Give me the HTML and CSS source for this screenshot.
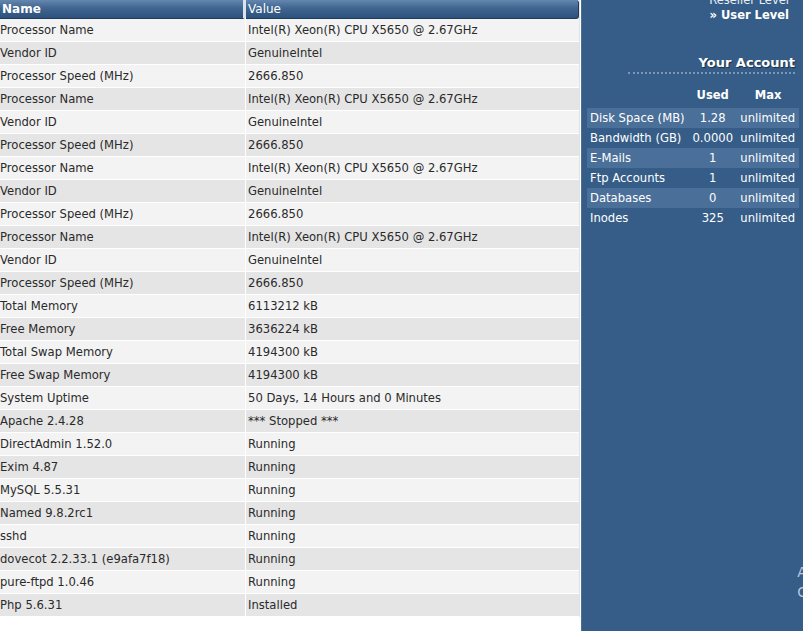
FILE: index.html
```html
<!DOCTYPE html>
<html lang="en">
<head>
  <meta charset="UTF-8">
  <title>System Information</title>
  <link rel="stylesheet" href="styles.css">
</head>
<body>
  <div class="page">
    <!-- System info table -->
    <div class="main">
      <table class="info">
        <thead>
          <tr><th class="name-head">Name</th><th class="value-head">Value</th></tr>
        </thead>
        <tbody>
          <tr><td>Processor Name</td><td>Intel(R) Xeon(R) CPU X5650 @ 2.67GHz</td></tr>
          <tr><td>Vendor ID</td><td>GenuineIntel</td></tr>
          <tr><td>Processor Speed (MHz)</td><td>2666.850</td></tr>
          <tr><td>Processor Name</td><td>Intel(R) Xeon(R) CPU X5650 @ 2.67GHz</td></tr>
          <tr><td>Vendor ID</td><td>GenuineIntel</td></tr>
          <tr><td>Processor Speed (MHz)</td><td>2666.850</td></tr>
          <tr><td>Processor Name</td><td>Intel(R) Xeon(R) CPU X5650 @ 2.67GHz</td></tr>
          <tr><td>Vendor ID</td><td>GenuineIntel</td></tr>
          <tr><td>Processor Speed (MHz)</td><td>2666.850</td></tr>
          <tr><td>Processor Name</td><td>Intel(R) Xeon(R) CPU X5650 @ 2.67GHz</td></tr>
          <tr><td>Vendor ID</td><td>GenuineIntel</td></tr>
          <tr><td>Processor Speed (MHz)</td><td>2666.850</td></tr>
          <tr><td>Total Memory</td><td>6113212 kB</td></tr>
          <tr><td>Free Memory</td><td>3636224 kB</td></tr>
          <tr><td>Total Swap Memory</td><td>4194300 kB</td></tr>
          <tr><td>Free Swap Memory</td><td>4194300 kB</td></tr>
          <tr><td>System Uptime</td><td>50 Days, 14 Hours and 0 Minutes</td></tr>
          <tr><td>Apache 2.4.28</td><td>*** Stopped ***</td></tr>
          <tr><td>DirectAdmin 1.52.0</td><td>Running</td></tr>
          <tr><td>Exim 4.87</td><td>Running</td></tr>
          <tr><td>MySQL 5.5.31</td><td>Running</td></tr>
          <tr><td>Named 9.8.2rc1</td><td>Running</td></tr>
          <tr><td>sshd</td><td>Running</td></tr>
          <tr><td>dovecot 2.2.33.1 (e9afa7f18)</td><td>Running</td></tr>
          <tr><td>pure-ftpd 1.0.46</td><td>Running</td></tr>
          <tr><td>Php 5.6.31</td><td>Installed</td></tr>
        </tbody>
      </table>
    </div>

    <!-- Sidebar -->
    <div class="sidebar">
      <div class="levels">
        <div class="level">Reseller Level</div>
        <div class="level current">&raquo; User Level</div>
      </div>

      <h3 class="account-title">Your Account</h3>

      <table class="usage">
        <thead>
          <tr><th></th><th class="num">Used</th><th class="max">Max</th></tr>
        </thead>
        <tbody>
          <tr class="alt"><td>Disk Space (MB)</td><td class="num">1.28</td><td class="max">unlimited</td></tr>
          <tr><td>Bandwidth (GB)</td><td class="num">0.0000</td><td class="max">unlimited</td></tr>
          <tr class="alt"><td>E-Mails</td><td class="num">1</td><td class="max">unlimited</td></tr>
          <tr><td>Ftp Accounts</td><td class="num">1</td><td class="max">unlimited</td></tr>
          <tr class="alt"><td>Databases</td><td class="num">0</td><td class="max">unlimited</td></tr>
          <tr><td>Inodes</td><td class="num">325</td><td class="max">unlimited</td></tr>
        </tbody>
      </table>

      <div class="edge-text">A<br>C</div>
    </div>
  </div>
</body>
</html>
```

FILE: styles.css
```css
body {
  font-family: "DejaVu Sans", Verdana, sans-serif;
  font-size: 11.6px;
  margin: 0;
  background-color: #ffffff;
  color: #222;
  overflow: hidden;
}

.page {
  display: flex;
  height: 631px;
}

.main {
  width: 581px;
  flex-shrink: 0;
}

.info {
  width: 580px;
  border-collapse: separate;
  border-spacing: 0;
  border-right: 1px solid #e2e2e2;
}

.info th {
  height: 18px;
  padding: 0 0 0 2px;
  text-align: left;
  color: #ffffff;
  font-size: 12px;
  background: linear-gradient(#6487ae, #3f6590 45%, #2d527c);
  border-bottom: 1px solid #1f3a5a;
  border-right: 1px solid #1f3a5a;
  border-radius: 0 0 3px 0;
}

.info th.name-head {
  width: 241px;
  border-right: 3px solid #dbe3ec;
  font-weight: bold;
}

.info th.value-head {
  font-weight: normal;
  border-radius: 0 3px 3px 0;
}

.info td {
  height: 22px;
  padding: 0 0 0 1px;
  border-bottom: 1px solid #ffffff;
  color: #2a2a2a;
  white-space: nowrap;
}

.info td:first-child {
  border-right: 1px solid #ffffff;
  padding-left: 0;
}

.info td + td {
  padding-left: 2px;
}

.info tbody tr:nth-child(odd) td {
  background-color: #f3f3f3;
}

.info tbody tr:nth-child(even) td {
  background-color: #e5e5e5;
}

.sidebar {
  flex: 1;
  background-color: #365d87;
  color: #ffffff;
  position: relative;
  border-left: 1px solid #4b6f96;
}

.levels {
  margin-top: -7px;
  padding-right: 14px;
  text-align: right;
}

.level {
  font-size: 11.5px;
  line-height: 15px;
  color: #e8eef5;
}

.level.current {
  font-weight: bold;
  color: #ffffff;
}

.account-title {
  margin: 32px 8px 0 46px;
  padding-bottom: 2px;
  text-align: right;
  font-size: 13px;
  font-weight: bold;
  text-shadow: 1px 1px 1px #1b2f47;
  border-bottom: 2px dotted #7c97b6;
}

.usage {
  width: 212px;
  margin: 7px 0 0 5px;
  border-collapse: collapse;
}

.usage th {
  height: 25px;
  font-weight: bold;
  text-align: center;
  font-size: 11.5px;
}

.usage th.max {
  text-align: center;
  padding-left: 2px;
}

.usage td {
  height: 20px;
  padding: 0 3px;
  white-space: nowrap;
}

.usage .num {
  text-align: center;
}

.usage td.max {
  text-align: right;
  padding-right: 4px;
}

.usage tr.alt td {
  background-color: #4a6f99;
}

.edge-text {
  position: absolute;
  right: -4px;
  top: 562px;
  font-size: 14px;
  line-height: 20px;
  color: #b9c8d9;
}
```
